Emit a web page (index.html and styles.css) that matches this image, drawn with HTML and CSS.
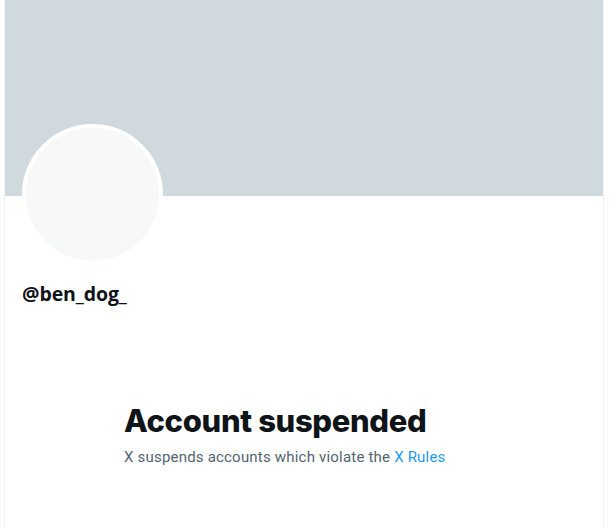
FILE: index.html
```html
<!DOCTYPE html>
<html lang="en">
<head>
<meta charset="utf-8">
<title>@ben_dog_</title>
<link rel="stylesheet" href="styles.css">
</head>
<body>
<main class="column">
  <div class="banner"></div>
  <div class="profile">
    <div class="avatar"><div class="avatar-inner"></div></div>
    <div class="handle">@ben_dog_</div>
  </div>
  <section class="empty">
    <h1 class="empty-title">Account suspended</h1>
    <p class="empty-text">X suspends accounts which violate the <a class="link" href="#">X Rules</a></p>
  </section>
</main>
</body>
</html>
```
FILE: styles.css
```css
html, body {
  margin: 0;
  padding: 0;
  background: #ffffff;
}
body {
  font-family: Roboto, "Liberation Sans", sans-serif;
  color: #0f1419;
}
.column {
  margin-left: 4px;
  width: 598px;
  min-height: 528px;
  border-left: 1px solid #eff3f4;
  border-right: 1px solid #eff3f4;
}
.banner {
  height: 196px;
  background: #cfd9de;
}
.profile {
  padding: 0 16px 0 17px;
}
.avatar {
  margin-top: -72px;
  width: 141px;
  height: 141px;
  box-sizing: border-box;
  border-radius: 50%;
  border: 4px solid #ffffff;
  background: #f7f9f9;
}
.handle {
  margin-top: 17px;
  font-family: "Open Sans", "Liberation Sans", sans-serif;
  font-weight: 700;
  font-size: 19.5px;
  line-height: 24px;
  letter-spacing: -0.1px;
}
.empty {
  width: 360px;
  margin: 97px auto 0;
}
.empty-title {
  margin: 0;
  font-family: Inter, "Liberation Sans", sans-serif;
  font-weight: 800;
  font-size: 31px;
  line-height: 36px;
  letter-spacing: -0.35px;
}
.empty-text {
  margin: 8px 0 0;
  font-size: 15px;
  line-height: 20px;
  letter-spacing: 0.2px;
  color: #536471;
}
.link {
  color: #1d9bf0;
  text-decoration: none;
}
```
